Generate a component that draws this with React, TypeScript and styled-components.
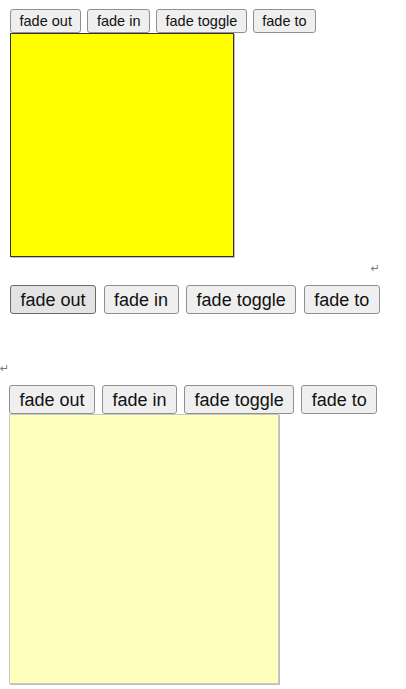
import React from "react";
import styled, { createGlobalStyle } from "styled-components";

const GlobalStyle = createGlobalStyle`
  body {
    margin: 0;
    background: #ffffff;
    font-family: "Liberation Sans", Arial, sans-serif;
  }
`;

const labels = ["fade out", "fade in", "fade toggle", "fade to"];

const Page = styled.div`
  width: 406px;
  height: 689px;
  overflow: hidden;
  display: flex;
  flex-direction: column;
`;

const Section = styled.div<{ $left: number; $top: number }>`
  display: flex;
  flex-direction: column;
  align-items: flex-start;
  padding-left: ${(p) => p.$left}px;
  margin-top: ${(p) => p.$top}px;
`;

const Toolbar = styled.div<{ $gap: number }>`
  display: flex;
  gap: ${(p) => p.$gap}px;
`;

const Button = styled.button<{ $big?: boolean; $pressed?: boolean; $pad: number }>`
  box-sizing: border-box;
  height: ${(p) => (p.$big ? 29 : 24)}px;
  padding: 0 ${(p) => p.$pad}px;
  font-family: "Liberation Sans", Arial, sans-serif;
  font-size: ${(p) => (p.$big ? 18 : 14.5)}px;
  color: #111;
  background: ${(p) => (p.$pressed ? "#e3e3e3" : "#efefef")};
  border: 1px solid ${(p) => (p.$pressed ? "#6a6a6a" : "#8f8f8f")};
  border-radius: 3px;
  line-height: 1;
  white-space: nowrap;
`;

const Square = styled.div<{ $size: number; $fill: string; $edge: string }>`
  box-sizing: border-box;
  width: ${(p) => p.$size}px;
  height: ${(p) => p.$size}px;
  background: ${(p) => p.$fill};
  border: 1px solid ${(p) => p.$edge};
  box-shadow: 1px 1px 0 #bdbdbd;
`;

const Mark = styled.div<{ $align: string; $top: number; $right?: number }>`
  align-self: stretch;
  text-align: ${(p) => p.$align};
  margin-top: ${(p) => p.$top}px;
  padding-right: ${(p) => p.$right ?? 0}px;
  height: 10px;
  font-size: 11px;
  line-height: 10px;
  color: #777;
  font-family: "DejaVu Sans", sans-serif;
`;

const Bar = ({
  gap,
  pad,
  big,
  firstPressed,
}: {
  gap: number;
  pad: number;
  big?: boolean;
  firstPressed?: boolean;
}) => (
  <Toolbar $gap={gap}>
    {labels.map((l, i) => (
      <Button key={l} $big={big} $pad={pad} $pressed={firstPressed && i === 0}>
        {l}
      </Button>
    ))}
  </Toolbar>
);

export default function App() {
  return (
    <Page>
      <GlobalStyle />
      <Section $left={10} $top={9}>
        <Bar gap={6} pad={8.5} />
        <Square $size={224} $fill="#ffff00" $edge="#333333" />
      </Section>
      <Mark $align="right" $top={7} $right={26}>↵</Mark>
      <Section $left={10} $top={11}>
        <Bar gap={7.5} pad={9.5} big firstPressed />
      </Section>
      <Mark $align="left" $top={50}>↵</Mark>
      <Section $left={9} $top={11}>
        <Bar gap={7} pad={9.5} big />
        <Square $size={270} $fill="#ffffbb" $edge="#c9c9c9" />
      </Section>
    </Page>
  );
}
